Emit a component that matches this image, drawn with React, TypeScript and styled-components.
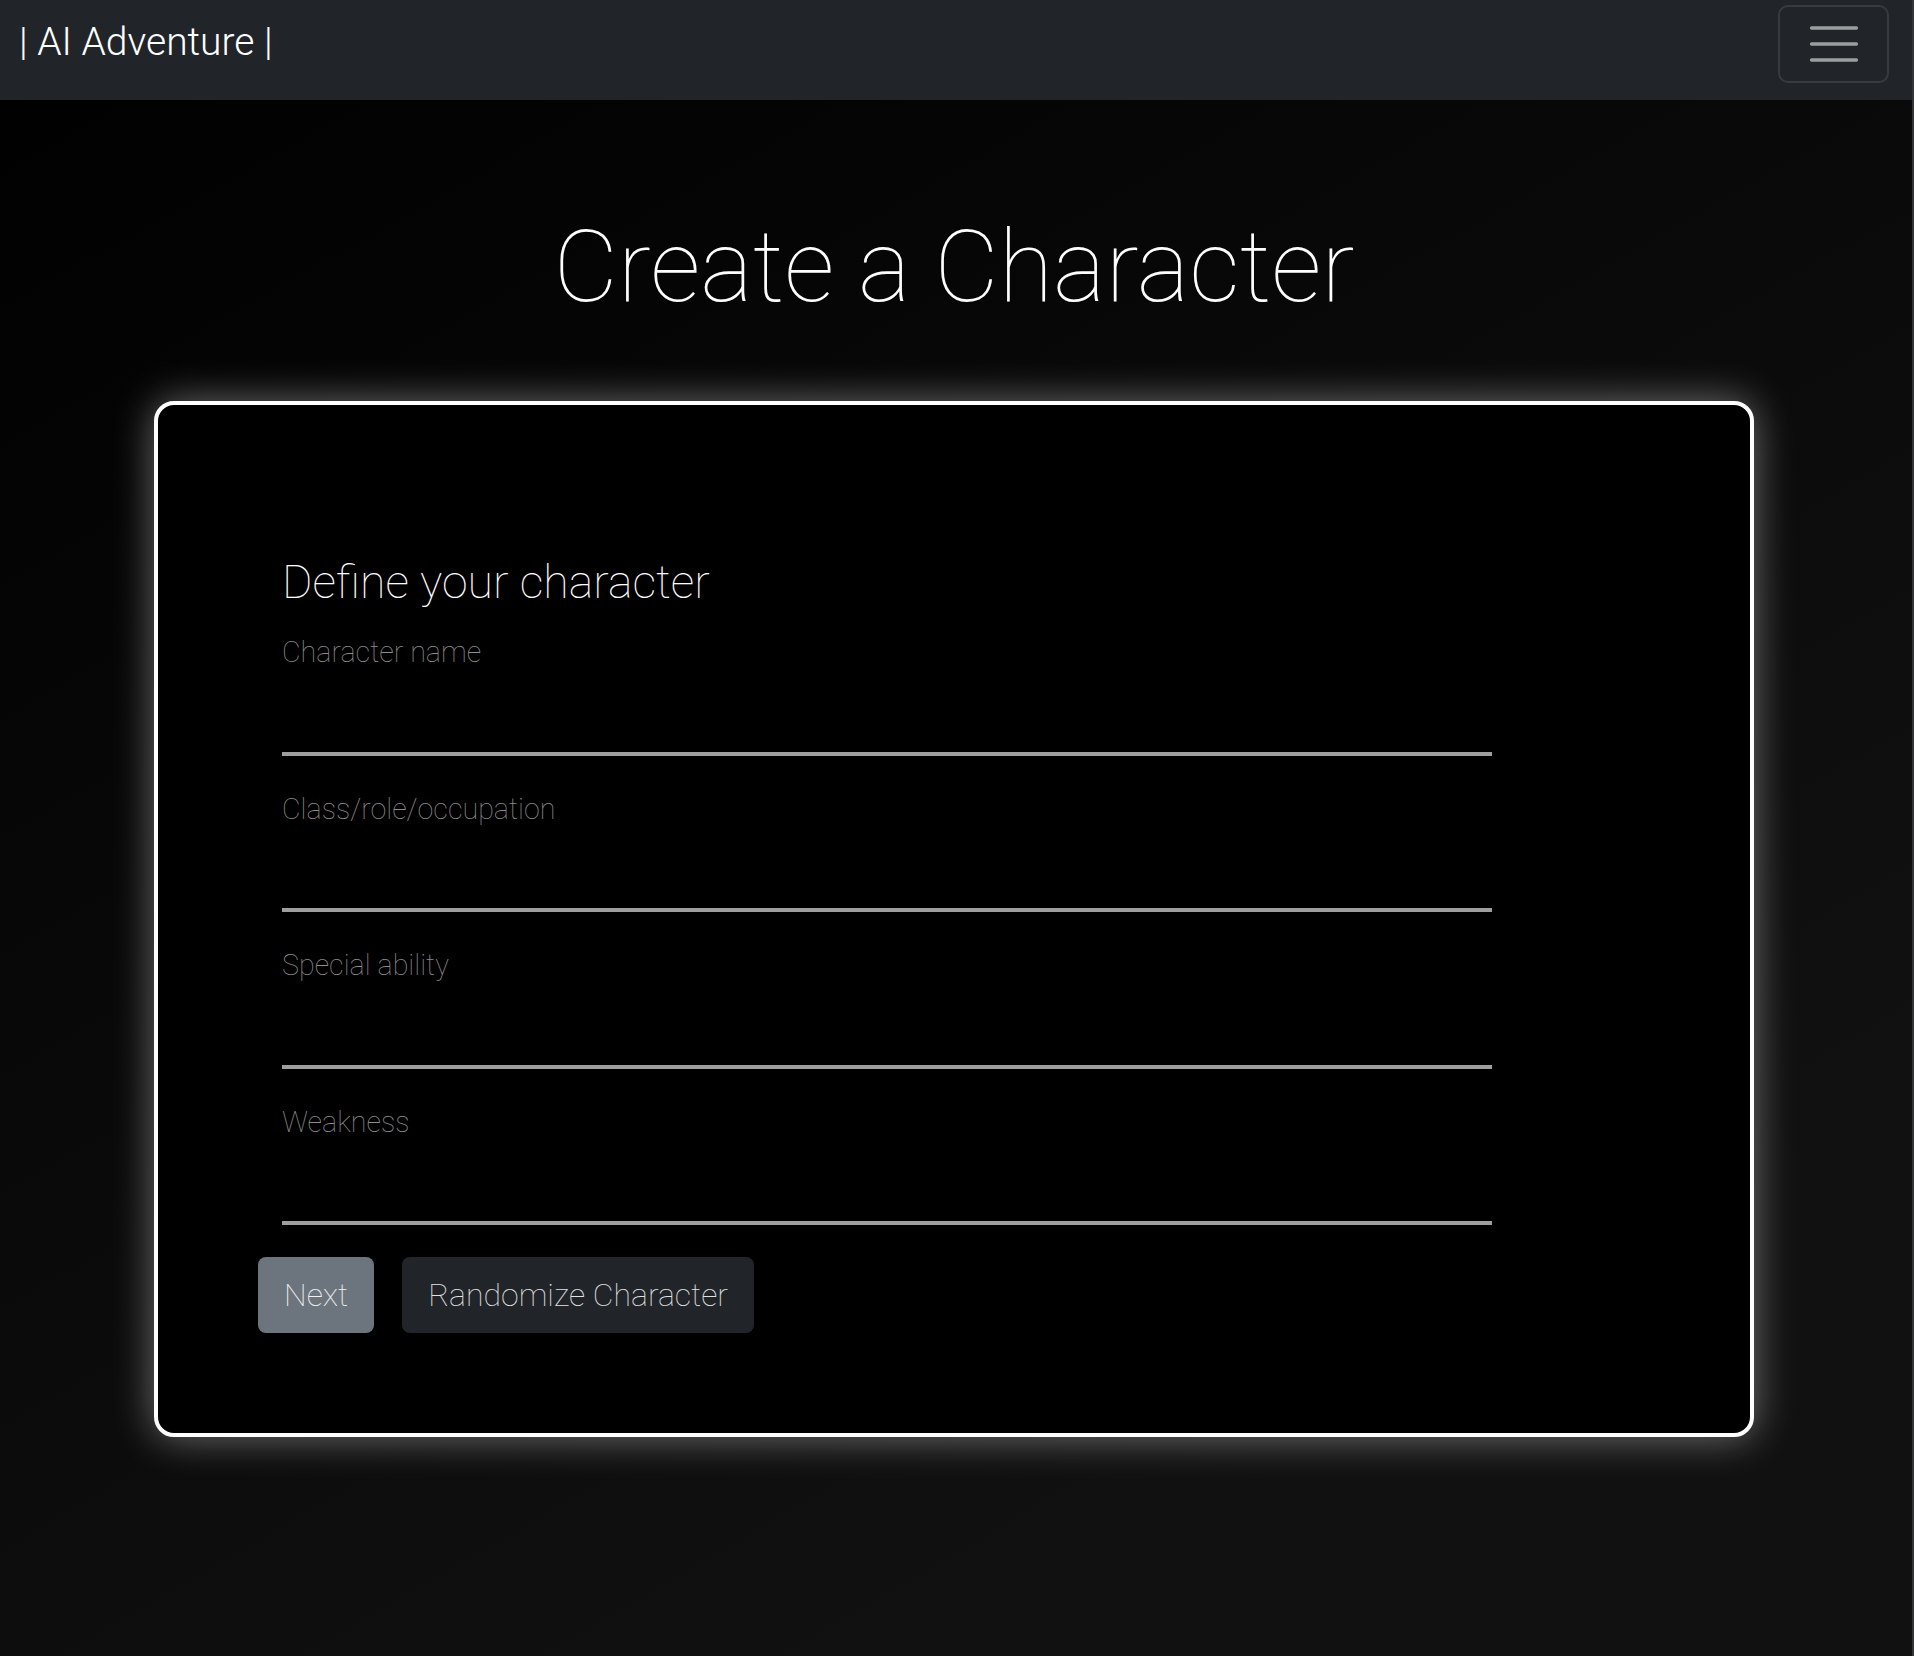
import React from "react";
import styled, { createGlobalStyle } from "styled-components";

const GlobalStyle = createGlobalStyle`
  html, body {
    margin: 0;
    padding: 0;
    background: #0d0d0d;
  }
  body {
    font-family: Roboto, "Noto Sans", "Liberation Sans", sans-serif;
    color: #fff;
  }
  * { box-sizing: border-box; }
`;

const Page = styled.div`
  min-height: 1656px;
  border-right: 2px solid #343536;
  background: linear-gradient(150deg, #000 0%, #050505 25%, #0c0c0c 55%, #111 80%, #111 100%);
  display: flex;
  flex-direction: column;
`;

const Navbar = styled.nav`
  height: 100px;
  background: #212529;
  display: flex;
  justify-content: space-between;
  align-items: flex-start;
  padding: 5px 23px 0 19px;
`;

const Brand = styled.a`
  margin-top: 8px;
  font-size: 39px;
  line-height: 1.5;
  font-weight: 300;
  color: #fff;
  text-decoration: none;
  white-space: pre;
`;

const Toggler = styled.button`
  width: 111px;
  height: 78px;
  border: 2px solid rgba(255, 255, 255, 0.1);
  border-radius: 10px;
  background: transparent;
  display: flex;
  align-items: center;
  justify-content: center;
  padding: 0;
  cursor: pointer;
`;

const Main = styled.main`
  display: flex;
  flex-direction: column;
  align-items: center;
  padding: 107px 4px 0 0;
`;

const Title = styled.h1`
  margin: 0 0 74px;
  font-size: 99.4px;
  line-height: 120px;
  font-weight: 100;
  color: #fff;
  text-align: center;
`;

const Card = styled.section`
  width: 1600px;
  background: #000;
  border: 4px solid #fff;
  border-radius: 20px;
  box-shadow: 0 0 40px rgba(255, 255, 255, 0.42);
  padding: 150px 100px 100px;
`;

const Form = styled.form`
  display: flex;
  flex-direction: column;
`;

const Fields = styled.div`
  width: 1234px;
  padding-left: 24px;
  display: flex;
  flex-direction: column;
`;

const FormHeading = styled.h2`
  margin: 0 0 23px;
  font-size: 46.5px;
  line-height: 54px;
  font-weight: 100;
  color: #fff;
`;

const Field = styled.div<{ $last?: boolean }>`
  display: flex;
  flex-direction: column;
  margin-bottom: ${(p) => (p.$last ? "32px" : "33px")};
`;

const Label = styled.label`
  font-size: 28.7px;
  line-height: 40.5px;
  font-weight: 100;
  color: #8e8e8e;
`;

const Input = styled.input`
  height: 83px;
  width: 100%;
  background: transparent;
  border: none;
  border-bottom: 4px solid #9e9e9e;
  outline: none;
  color: #fff;
  font-family: inherit;
  font-size: 27px;
  font-weight: 300;
  padding: 0;
`;

const Buttons = styled.div`
  display: flex;
  gap: 28px;
`;

const Button = styled.button<{ $variant: "secondary" | "dark" }>`
  height: 76px;
  padding: 0 26px;
  border: none;
  border-radius: 8px;
  font-family: inherit;
  font-size: 32px;
  font-weight: 100;
  cursor: pointer;
  background: ${(p) => (p.$variant === "secondary" ? "#6c757d" : "#212529")};
  color: ${(p) => (p.$variant === "secondary" ? "#f2f2f2" : "#e2e2e2")};
`;

const fields = [
  "Character name",
  "Class/role/occupation",
  "Special ability",
  "Weakness",
];

export default function App() {
  return (
    <>
      <GlobalStyle />
      <Page>
        <Navbar>
          <Brand href="#">| AI Adventure |</Brand>
          <Toggler aria-label="Toggle navigation">
            <svg width="52" height="40" viewBox="0 0 52 40">
              <g stroke="#9c9d9e" strokeWidth="3.3" strokeLinecap="round">
                <line x1="3.5" y1="4" x2="48.5" y2="4" />
                <line x1="3.5" y1="20" x2="48.5" y2="20" />
                <line x1="3.5" y1="36" x2="48.5" y2="36" />
              </g>
            </svg>
          </Toggler>
        </Navbar>
        <Main>
          <Title>Create a Character</Title>
          <Card>
            <Form onSubmit={(e) => e.preventDefault()}>
              <Fields>
                <FormHeading>Define your character</FormHeading>
                {fields.map((f, i) => (
                  <Field key={f} $last={i === fields.length - 1}>
                    <Label htmlFor={`f${i}`}>{f}</Label>
                    <Input id={`f${i}`} type="text" />
                  </Field>
                ))}
              </Fields>
              <Buttons>
                <Button type="submit" $variant="secondary">Next</Button>
                <Button type="button" $variant="dark">Randomize Character</Button>
              </Buttons>
            </Form>
          </Card>
        </Main>
      </Page>
    </>
  );
}
